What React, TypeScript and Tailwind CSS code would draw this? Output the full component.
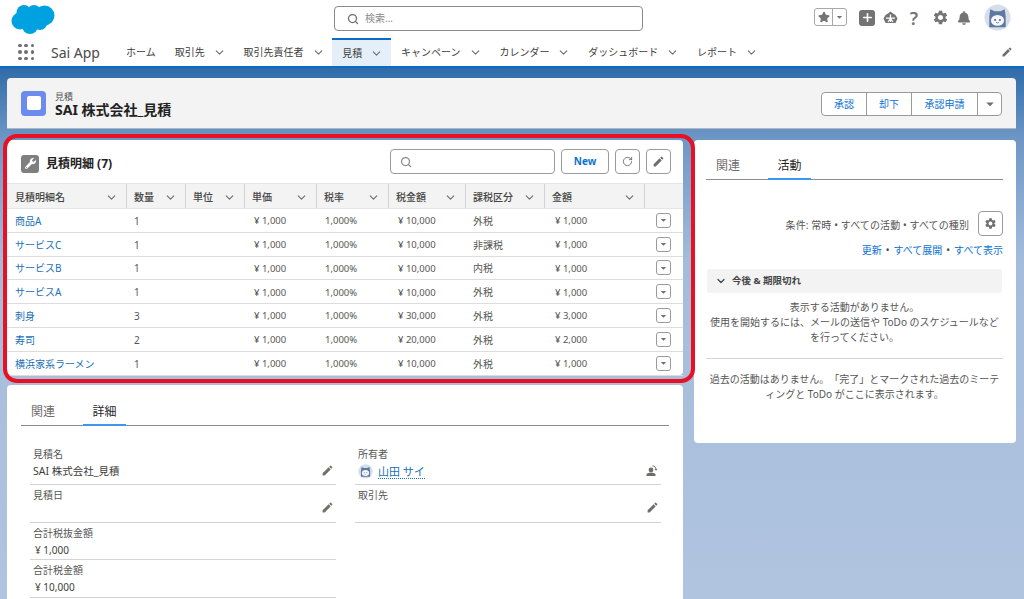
import { ChevronDown, Search, RotateCw, Plus } from 'lucide-react'
import { FaBell, FaStar, FaWrench } from 'react-icons/fa'
import { MdEdit, MdSettings, MdArrowDropDown } from 'react-icons/md'

const navItems = [
  { label: 'ホーム', chevron: false },
  { label: '取引先', chevron: true },
  { label: '取引先責任者', chevron: true },
  { label: '見積', chevron: true, active: true },
  { label: 'キャンペーン', chevron: true },
  { label: 'カレンダー', chevron: true },
  { label: 'ダッシュボード', chevron: true },
  { label: 'レポート', chevron: true },
]

const columns = ['見積明細名', '数量', '単位', '単価', '税率', '税金額', '課税区分', '金額']

const rows = [
  { name: '商品A', qty: '1', tax: '¥ 10,000', kind: '外税', total: '¥ 1,000' },
  { name: 'サービスC', qty: '1', tax: '¥ 10,000', kind: '非課税', total: '¥ 1,000' },
  { name: 'サービスB', qty: '1', tax: '¥ 10,000', kind: '内税', total: '¥ 1,000' },
  { name: 'サービスA', qty: '1', tax: '¥ 10,000', kind: '外税', total: '¥ 1,000' },
  { name: '刺身', qty: '3', tax: '¥ 30,000', kind: '外税', total: '¥ 3,000' },
  { name: '寿司', qty: '2', tax: '¥ 20,000', kind: '外税', total: '¥ 2,000' },
  { name: '横浜家系ラーメン', qty: '1', tax: '¥ 10,000', kind: '外税', total: '¥ 1,000' },
]

const gridCols = 'grid grid-cols-[120px_59px_59px_72px_72px_77px_79px_100px_38px]'

function Cloud() {
  return (
    <svg width="44" height="31" viewBox="0 0 44 31" className="fill-[#00a1e0]">
      <circle cx="13" cy="9.5" r="7.5" />
      <circle cx="23" cy="9" r="7" />
      <circle cx="33.5" cy="12.5" r="10" />
      <circle cx="9" cy="18" r="8.5" />
      <circle cx="19" cy="23" r="8" />
      <circle cx="29" cy="20" r="7" />
      <rect x="10" y="8" width="22" height="14" />
    </svg>
  )
}

function Astro({ size }: { size: number }) {
  return (
    <svg width={size} height={size} viewBox="0 0 28 28">
      <circle cx="14" cy="14" r="13.5" fill="#d5deea" />
      <path d="M6.5 5.5 L11 7.5 H17 L21.5 5.5 L22.5 13 V24 H5.5 V13 Z" fill="#5c7a9e" />
      <ellipse cx="14" cy="17" rx="6.8" ry="5.6" fill="#f5f7fa" />
      <circle cx="11.5" cy="16.5" r="0.9" fill="#33475f" />
      <circle cx="16.5" cy="16.5" r="0.9" fill="#33475f" />
      <path d="M12.5 19 Q14 20.2 15.5 19" stroke="#33475f" strokeWidth="0.6" fill="none" />
    </svg>
  )
}

function Trail() {
  return (
    <svg width="15" height="14" viewBox="0 0 15 14" className="fill-[#747474]">
      <path d="M7.5 0.5 L10 2.5 L12.5 4 L14.5 7.5 L12.5 12 L2.5 12 L0.5 7.5 L2.5 4 L5 2.5 Z" />
      <path d="M3 7.2 H12 M7.5 3.5 V11 M5 11 L7.5 7.5 L10 11" stroke="#fff" strokeWidth="1.2" fill="none" />
    </svg>
  )
}

function ChangeOwner() {
  return (
    <svg width="12" height="11" viewBox="0 0 12 11" className="fill-[#706e6b]">
      <circle cx="5" cy="5" r="2.4" />
      <path d="M0.5 11 V9.6 C0.5 8.4 2.5 7.8 5 7.8 C7.5 7.8 9.5 8.4 9.5 9.6 V11 Z" />
      <path d="M6.5 0.8 C8.6 1 10 2.4 10 4.6" stroke="#706e6b" strokeWidth="1" fill="none" />
      <path d="M8.6 4 L10 5.8 L11.4 4 Z" />
    </svg>
  )
}

function Waffle() {
  return (
    <div className="grid grid-cols-3 gap-[3px] w-[16px]">
      {Array.from({ length: 9 }).map((_, i) => (
        <span key={i} className="w-[3.5px] h-[3.5px] rounded-full bg-[#706e6b]" />
      ))}
    </div>
  )
}

function Field({ label, value, edit, owner, change, tall }: { label: string; value?: string; edit?: boolean; owner?: boolean; change?: boolean; tall?: boolean }) {
  return (
    <div className={`${tall ? 'h-[41px]' : 'h-[37.5px]'} border-b border-[#d4d4d4] px-[3px] pt-[3px] relative`}>
      <div className="text-[10px] leading-[14px] text-[#565656]">{label}</div>
      <div className={`flex items-center h-[20px] pt-[1px] text-[#3e3e3c] ${value?.startsWith('¥') ? 'pl-[2px] text-[10px]' : 'text-[10.5px]'}`}>
        {owner && <Astro size={15} />}
        {owner ? <span className="ml-[5px] text-[11px] text-[#1b6fb5] border-b border-dotted border-[#1b6fb5] leading-[13px]">{value}</span> : <span>{value}</span>}
      </div>
      {edit && <MdEdit className={`absolute right-[2px] text-[#706e6b] ${tall ? 'top-[20px]' : 'top-[16px]'}`} size={13} />}
      {change && (
        <div className="absolute right-[3px] top-[21px] flex">
          <ChangeOwner />
        </div>
      )}
    </div>
  )
}

function Tabs({ first, second }: { first: string; second: string }) {
  return (
    <div className="flex h-[33px] border-b border-[#8c8c8c] text-[12px] leading-[37px]">
      <span className="w-[62px] pl-[10px] text-[#706e6b]">{first}</span>
      <span className="w-[43px] text-center text-[#1f1f1f] border-b-[2px] border-[#3b97f0] h-[33px]">{second}</span>
    </div>
  )
}

function IconButton({ children, className }: { children: React.ReactNode; className?: string }) {
  return (
    <button className={`h-[25px] w-[25px] flex items-center justify-center bg-white border border-[#9a9a9a] rounded-[4px] text-[#706e6b] ${className ?? ''}`}>
      {children}
    </button>
  )
}

export default function App() {
  return (
    <div className="w-[1024px] h-[599px] overflow-hidden bg-[linear-gradient(180deg,#1a5e9f_0px,#2f6ca9_68px,#6f97c6_140px,#a4bcdb_260px,#b0c4df_100%)] font-['Noto_Sans','Noto_Sans_CJK_JP',sans-serif] [text-spacing-trim:space-all]">
      <header className="bg-white h-[68px] border-b-[2px] border-[#0b6cc7]">
        <div className="h-[38px] flex items-start relative">
          <div className="ml-[11px] mt-[3px]"><Cloud /></div>
          <div className="ml-[279px] mt-[6px] w-[309px] h-[25px] bg-white border border-[#8a8a8a] rounded-[4px] flex items-center pl-[12px]">
            <Search size={12} className="text-[#706e6b]" strokeWidth={2.5} />
            <span className="ml-[6px] text-[10px] text-[#8a8a8a]">検索...</span>
          </div>
          <div className="ml-auto mr-[13px] mt-[4px] flex items-center text-[#747474]">
            <div className="flex h-[18px] -mt-[1px] border border-[#a8a8a8] rounded-[3px] mr-[12px]">
              <span className="w-[18px] flex items-center justify-center border-r border-[#a8a8a8]"><FaStar size={12} /></span>
              <span className="w-[13px] flex items-center justify-center"><MdArrowDropDown size={14} /></span>
            </div>
            <span className="w-[16px] h-[16px] rounded-[3px] bg-[#747474] flex items-center justify-center mr-[8px]"><Plus size={13} strokeWidth={3} className="text-white" /></span>
            <span className="mr-[10px]"><Trail /></span>
            <span className="w-[12px] text-center text-[18px] font-semibold leading-[18px] mr-[12px]">?</span>
            <MdSettings size={17} className="mr-[8px]" />
            <FaBell size={14} className="mr-[13px]" />
            <Astro size={27} />
          </div>
        </div>
        <nav className="h-[28px] flex items-center relative">
          <div className="ml-[18px] w-[33px]"><Waffle /></div>
          <span className="w-[65px] text-[14px] text-[#4a4a4a]">Sai App</span>
          <div className="flex h-[28px]">
            {navItems.map((item) => (
              <div
                key={item.label}
                className={`flex items-center gap-[8px] pl-[10px] ${item.chevron ? 'pr-[7.8px]' : 'pr-[9px]'} text-[10px] text-[#3e3e3c] ${item.active ? 'bg-[#e5eff9] border-t-[2px] border-[#0b6cc7]' : ''}`}
              >
                <span>{item.label}</span>
                {item.chevron && <ChevronDown size={13} className="text-[#706e6b]" />}
              </div>
            ))}
          </div>
          <MdEdit size={12} className="absolute right-[11px] top-[8px] text-[#706e6b]" />
        </nav>
      </header>

      <main className="pl-[7px] pr-[8px] pt-[10px]">
        <section className="h-[51px] bg-[#f3f3f3] rounded-t-[4px] border-b border-[#b0b8c4] flex items-center pl-[14px] pr-[14px]">
          <div className="w-[25px] h-[25px] rounded-[4px] bg-[#6b8cec] flex items-center justify-center">
            <div className="w-[14px] h-[14px] rounded-[2px] bg-white" />
          </div>
          <div className="ml-[9px] mt-[2px]">
            <div className="text-[9px] leading-[11px] text-[#565656]">見積</div>
            <div className="text-[14px] leading-[16px] font-bold text-[#222]">SAI 株式会社_見積</div>
          </div>
          <div className="ml-auto mt-[2px] flex h-[24px] bg-white border border-[#9a9a9a] rounded-[4px] text-[10px] text-[#0b72d1]">
            <span className="w-[45px] flex items-center justify-center border-r border-[#9a9a9a]">承認</span>
            <span className="w-[45px] flex items-center justify-center border-r border-[#9a9a9a]">却下</span>
            <span className="w-[66px] flex items-center justify-center border-r border-[#9a9a9a]">承認申請</span>
            <span className="w-[23px] flex items-center justify-center text-[#706e6b]"><MdArrowDropDown size={18} /></span>
          </div>
        </section>

        <div className="mt-[11px] flex gap-[11px] items-start">
          <div className="w-[676px] flex flex-col gap-[10px]">
            <section className="relative bg-white rounded-[4px] h-[235px]">
              <div className="h-[43px] flex items-center pl-[14px] pr-[12px]">
                <div className="w-[18px] h-[18px] mt-[4px] rounded-[3px] bg-[#7f7f7f] flex items-center justify-center">
                  <FaWrench size={11} className="text-white" />
                </div>
                <span className="ml-[7px] mt-[4px] text-[12px] font-bold text-[#222]">見積明細 (7)</span>
                <div className="ml-auto w-[165px] h-[25px] border border-[#9a9a9a] rounded-[4px] flex items-center pl-[9px]">
                  <Search size={12} className="text-[#8a8a8a]" strokeWidth={2.5} />
                </div>
                <button className="ml-[6px] w-[48px] h-[25px] border border-[#9a9a9a] rounded-[4px] text-[10px] font-bold text-[#0b72d1]">New</button>
                <IconButton className="ml-[6px]"><RotateCw size={11} /></IconButton>
                <IconButton className="ml-[6px]"><MdEdit size={13} /></IconButton>
              </div>
              <div className={`${gridCols} h-[26px] bg-[#f3f3f3] border-y border-[#e5e5e5]`}>
                {columns.map((c, i) => (
                  <div key={c} className={`flex items-center justify-between pt-[2px] pr-[8px] border-r-[1.5px] border-[#d4d4d4] text-[10px] font-medium text-[#444] ${i === 0 ? 'pl-[8px]' : 'pl-[7px]'}`}>
                    <span>{c}</span>
                    <ChevronDown size={13} className="text-[#706e6b]" />
                  </div>
                ))}
                <div />
              </div>
              {rows.map((r) => (
                <div key={r.name} className={`${gridCols} h-[23.8px] border-b border-[#dddddd] last:border-b-0 items-center text-[10px] text-[#565656]`}>
                  <a className="pl-[8px] pt-[2px] text-[#1b6fb5]">{r.name}</a>
                  <span className="pl-[7px] pt-[2px]">{r.qty}</span>
                  <span />
                  <span className="pl-[9px] pt-[2px] text-[9.5px]">¥ 1,000</span>
                  <span className="pl-[8px] pt-[2px] text-[9.5px]">1,000%</span>
                  <span className="pl-[9px] pt-[2px] text-[9.5px]">{r.tax}</span>
                  <span className="pl-[7px] pt-[2px]">{r.kind}</span>
                  <span className="pl-[10px] pt-[2px] text-[9.5px]">{r.total}</span>
                  <span className="flex justify-center">
                    <span className="w-[15px] h-[15px] mr-[1px] border border-[#9a9a9a] rounded-[3px] flex items-center justify-center text-[#706e6b]">
                      <MdArrowDropDown size={14} />
                    </span>
                  </span>
                </div>
              ))}
              <div className="absolute left-[-4px] right-[-12px] top-[-6px] bottom-[-8px] border-[4px] border-[#e81123] rounded-[14px] pointer-events-none" />
            </section>

            <section className="bg-white rounded-t-[4px] h-[240px] pt-[8px] px-[14px]">
              <Tabs first="関連" second="詳細" />
              <div className="mt-[18px] pl-[9px] pr-[9px] grid grid-cols-[306px_306px] gap-x-[19px]">
                <div>
                  <Field tall label="見積名" value="SAI 株式会社_見積" edit />
                  <Field label="見積日" edit />
                  <Field label="合計税抜金額" value="¥ 1,000" />
                  <Field label="合計税金額" value="¥ 10,000" />
                </div>
                <div>
                  <Field tall label="所有者" value="山田 サイ" owner change />
                  <Field label="取引先" edit />
                </div>
              </div>
            </section>
          </div>

          <aside className="w-[322px] h-[303px] bg-white rounded-[4px] pt-[7px] pl-[12px] pr-[13px] text-[#444]">
            <Tabs first="関連" second="活動" />
            <div className="mt-[31px] flex items-center justify-end gap-[9px]">
              <span className="pt-[3px] text-[10px] tracking-[0.1px] text-[#565656]">条件: 常時 • すべての活動 • すべての種別</span>
              <IconButton><MdSettings size={13} /></IconButton>
            </div>
            <div className="mt-[7px] flex justify-end gap-[4px] text-[10px] leading-[14px] text-[#0b72d1]">
              <span>更新</span><span className="text-[#444]">•</span><span>すべて展開</span><span className="text-[#444]">•</span><span>すべて表示</span>
            </div>
            <div className="mt-[12px] mx-[1px] h-[24px] bg-[#f3f3f3] rounded-[3px] flex items-center pl-[8px] gap-[5px] text-[9.5px] font-bold text-[#444]">
              <ChevronDown size={12} strokeWidth={2.5} />
              <span>今後 &amp; 期限切れ</span>
            </div>
            <p className="mt-[7px] text-center text-[10px] leading-[15px] text-[#565656]">
              表示する活動がありません。<br />
              使用を開始するには、メールの送信や ToDo のスケジュールなど<br />
              を行ってください。
            </p>
            <div className="mt-[13px] border-t border-[#d4d4d4]" />
            <p className="mt-[13px] text-center text-[10px] leading-[15px] text-[#565656]">
              過去の活動はありません。「完了」とマークされた過去のミーテ<br />
              ィングと ToDo がここに表示されます。
            </p>
          </aside>
        </div>
      </main>
    </div>
  )
}
